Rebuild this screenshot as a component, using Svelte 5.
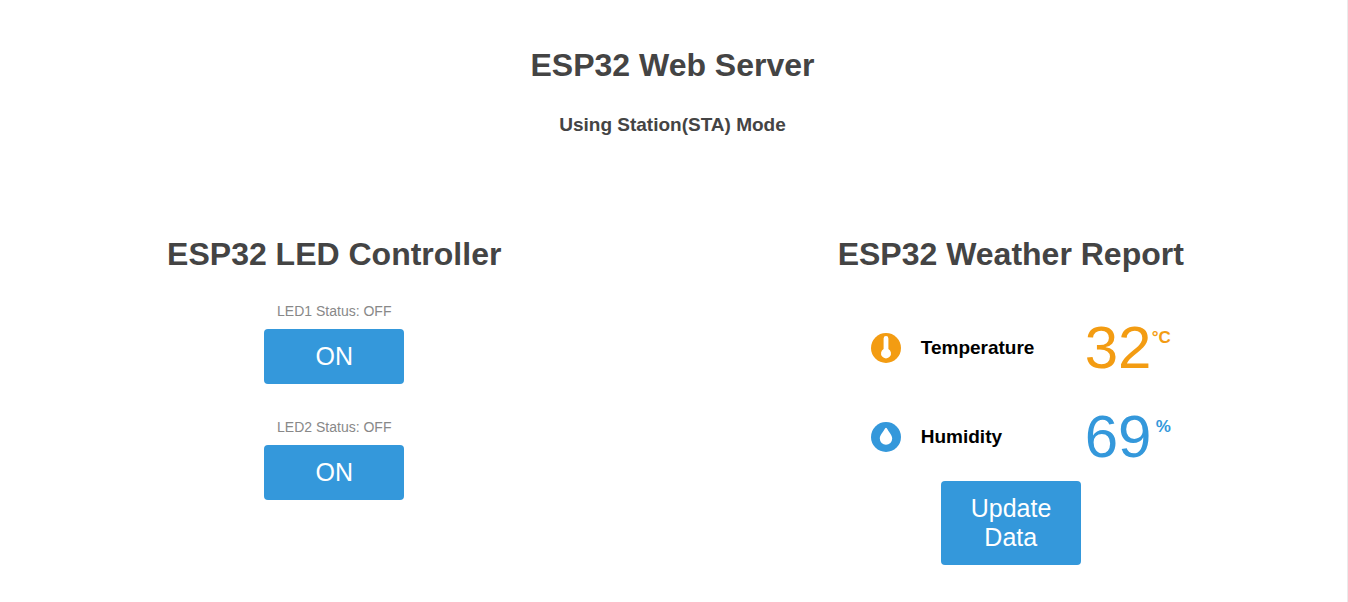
<script>
  let leds = $state([
    { name: 'LED1', on: false },
    { name: 'LED2', on: false }
  ]);
</script>

<main>
  <header>
    <h1>ESP32 Web Server</h1>
    <h3>Using Station(STA) Mode</h3>
  </header>
  <div class="columns">
    <section class="controller">
      <h1>ESP32 LED Controller</h1>
      {#each leds as led}
        <div class="led">
          <p>{led.name} Status: {led.on ? 'ON' : 'OFF'}</p>
          <button type="button" onclick={() => (led.on = !led.on)}>{led.on ? 'OFF' : 'ON'}</button>
        </div>
      {/each}
    </section>
    <section class="weather">
      <h1>ESP32 Weather Report</h1>
      <div class="readings">
        <div class="data temperature">
          <svg class="icon" viewBox="0 0 30 30" aria-hidden="true">
            <circle cx="15" cy="15" r="15" />
            <path d="M12.600 5.400a2.400 2.400 0 0 1 4.800 0V16a5 5 0 1 1-4.800 0z" fill="#fff" />
          </svg>
          <span class="label">Temperature</span>
          <span class="value">32<sup>°C</sup></span>
        </div>
        <div class="data humidity">
          <svg class="icon" viewBox="0 0 30 30" aria-hidden="true">
            <circle cx="15" cy="15" r="15" />
            <path d="M14.200 6.300Q15 5.200 15.800 6.300C17.800 10 21.200 13.200 21.200 16.600a6.200 6.200 0 0 1-12.400 0C8.800 13.200 12.200 10 14.200 6.300z" fill="#fff" />
          </svg>
          <span class="label">Humidity</span>
          <span class="value">69<sup>%</sup></span>
        </div>
      </div>
      <button type="button">Update Data</button>
    </section>
  </div>
</main>

<style>
  :global(body) {
    margin: 0;
    background: #fff;
  }
  main {
    min-height: 100vh;
    box-sizing: border-box;
    padding: 46px 2px 0 0;
    border-right: 1px solid #ebebeb;
    font-family: "Liberation Sans", Arial, sans-serif;
    text-align: center;
  }
  h1 {
    margin: 0;
    color: #444;
    font-size: 32px;
    line-height: 38px;
  }
  h3 {
    margin: 30px 0 0;
    color: #444;
    font-size: 19px;
    line-height: 22px;
  }
  .columns {
    display: grid;
    grid-template-columns: 1fr 1fr;
    column-gap: 8px;
    margin-top: 99px;
  }
  section {
    display: flex;
    flex-direction: column;
    align-items: center;
  }
  .controller h1 {
    margin-bottom: 30px;
  }
  .led {
    margin-bottom: 35px;
  }
  p {
    margin: 0 0 10px;
    color: #888;
    font-size: 14px;
    line-height: 16px;
  }
  button {
    width: 140px;
    padding: 13px 30px;
    border: 0;
    border-radius: 4px;
    background: #3498db;
    color: #fff;
    font: 25px/29px "Liberation Sans", Arial, sans-serif;
    cursor: pointer;
  }
  .readings {
    display: grid;
    row-gap: 20px;
    margin: 40px 0 10px;
    padding-left: 20px;
  }
  .data {
    display: grid;
    grid-template-columns: 30px 144px 86px;
    column-gap: 20px;
    align-items: center;
    height: 69px;
    text-align: left;
  }
  .icon {
    width: 30px;
    height: 30px;
    fill: currentColor;
  }
  .label {
    color: #000;
    font-size: 19px;
    font-weight: 600;
  }
  .value {
    display: flex;
    justify-content: space-between;
    font-size: 60px;
    line-height: 69px;
  }
  sup {
    margin-top: 15px;
    font-size: 17px;
    font-weight: 600;
    line-height: 20px;
  }
  .temperature {
    color: #f39c12;
  }
  .humidity {
    color: #3498db;
  }
</style>
